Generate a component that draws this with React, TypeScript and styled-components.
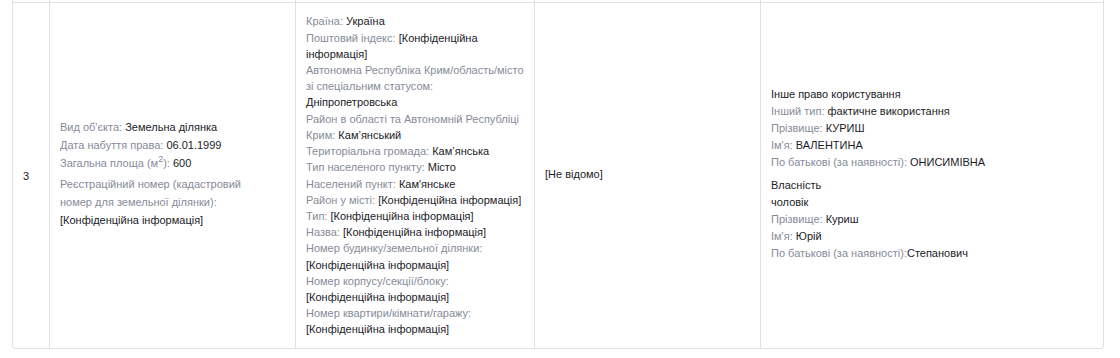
import React from "react";
import styled, { createGlobalStyle } from "styled-components";

const GlobalStyle = createGlobalStyle`
  body {
    margin: 0;
    background: #fff;
    font-family: "Liberation Sans", Arial, sans-serif;
    font-size: 11px;
    color: #212529;
  }
`;

const Wrap = styled.div`
  width: 1092px;
  margin-left: 12px;
  border: 1px solid #dee0e6;
  border-top: 0;
  border-radius: 0 0 4px 4px;
  box-sizing: border-box;
`;

const Row = styled.div<{ stub?: boolean }>`
  display: grid;
  grid-template-columns: 37px 246px 239px 226px 1fr;
  height: ${(p) => (p.stub ? "2px" : "345px")};
  border-bottom: ${(p) => (p.stub ? "1px solid #dee0e6" : "0")};
`;

const Cell = styled.div<{ lift?: number }>`
  display: flex;
  flex-direction: column;
  justify-content: center;
  padding: 0 10px ${(p) => p.lift ?? 0}px;
  border-right: 1px solid #dee0e6;
  box-sizing: border-box;
  min-width: 0;

  &:last-child {
    border-right: 0;
  }
`;

const Label = styled.span`
  color: #868b9a;
`;

const Value = styled.span`
  color: #1b1b1f;
`;

const Lines = styled.div<{ lh: number }>`
  line-height: ${(p) => p.lh}px;
`;

const Line = styled.div``;

const RegBlock = styled.div`
  margin-top: 3px;
  max-width: 190px;
`;

const Group = styled.div`
  & + & {
    margin-top: 5px;
  }
`;

const Sup = styled.sup`
  font-size: 9px;
  line-height: 0;
  vertical-align: 5px;
`;

const conf = "[Конфіденційна інформація]";

const address: [string, string][] = [
  ["Країна: ", "Україна"],
  ["Поштовий індекс: ", conf],
  ["Автономна Республіка Крим/область/місто зі спеціальним статусом: ", "Дніпропетровська"],
  ["Район в області та Автономній Республіці Крим: ", "Кам’янський"],
  ["Територіальна громада: ", "Кам’янська"],
  ["Тип населеного пункту: ", "Місто"],
  ["Населений пункт: ", "Кам'янське"],
  ["Район у місті: ", conf],
  ["Тип: ", conf],
  ["Назва: ", conf],
  ["Номер будинку/земельної ділянки: ", conf],
  ["Номер корпусу/секції/блоку: ", conf],
  ["Номер квартири/кімнати/гаражу: ", conf],
];

export default function App() {
  return (
    <>
      <GlobalStyle />
      <Wrap>
        <Row stub>
          <Cell />
          <Cell />
          <Cell />
          <Cell />
          <Cell />
        </Row>
        <Row>
          <Cell>
            <Value>3</Value>
          </Cell>
          <Cell lift={4}>
            <Lines lh={18}>
              <Line>
                <Label>Вид об'єкта: </Label>
                <Value>Земельна ділянка</Value>
              </Line>
              <Line>
                <Label>Дата набуття права: </Label>
                <Value>06.01.1999</Value>
              </Line>
              <Line>
                <Label>
                  Загальна площа (м<Sup>2</Sup>):{" "}
                </Label>
                <Value>600</Value>
              </Line>
              <RegBlock>
                <Label>Реєстраційний номер (кадастровий номер для земельної ділянки): </Label>
                <Value>{conf}</Value>
              </RegBlock>
            </Lines>
          </Cell>
          <Cell>
            <Lines lh={16.2}>
              {address.map(([label, value], i) => (
                <Line key={`addr-${i}`}>
                  <Label>{label}</Label>
                  <Value>{value}</Value>
                </Line>
              ))}
            </Lines>
          </Cell>
          <Cell lift={3}>
            <Value>[Не відомо]</Value>
          </Cell>
          <Cell lift={3}>
            <Lines lh={17.1}>
              <Group>
                <Line>
                  <Value>Інше право користування</Value>
                </Line>
                <Line>
                  <Label>Інший тип: </Label>
                  <Value>фактичне використання</Value>
                </Line>
                <Line>
                  <Label>Прізвище: </Label>
                  <Value>КУРИШ</Value>
                </Line>
                <Line>
                  <Label>Ім'я: </Label>
                  <Value>ВАЛЕНТИНА</Value>
                </Line>
                <Line>
                  <Label>По батькові (за наявності): </Label>
                  <Value>ОНИСИМІВНА</Value>
                </Line>
              </Group>
              <Group>
                <Line>
                  <Value>Власність</Value>
                </Line>
                <Line>
                  <Value>чоловік</Value>
                </Line>
                <Line>
                  <Label>Прізвище: </Label>
                  <Value>Куриш</Value>
                </Line>
                <Line>
                  <Label>Ім'я: </Label>
                  <Value>Юрій</Value>
                </Line>
                <Line>
                  <Label>По батькові (за наявності):</Label>
                  <Value>Степанович</Value>
                </Line>
              </Group>
            </Lines>
          </Cell>
        </Row>
      </Wrap>
    </>
  );
}
